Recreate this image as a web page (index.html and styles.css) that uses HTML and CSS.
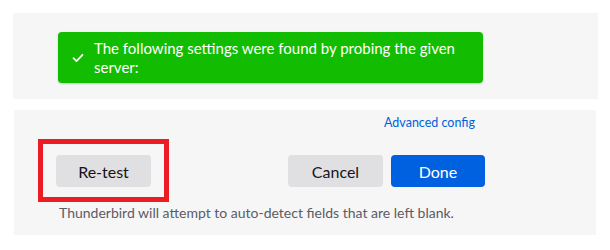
FILE: index.html
```html
<!DOCTYPE html>
<html lang="en">
<head>
    <meta charset="UTF-8">
    <title>Account setup</title>
    <link rel="stylesheet" href="styles.css">
</head>
<body>
    <div class="panel result-panel">
        <div class="notice">
            <svg class="notice-icon" width="12" height="10" viewBox="0 0 12 10">
                <path d="M1.5 5.2 L4.5 8.2 L10.5 1.8" fill="none" stroke="#fff" stroke-width="1.8" stroke-linecap="round" stroke-linejoin="round"/>
            </svg>
            <span class="notice-text">The following settings were found by probing the given server:</span>
        </div>
    </div>

    <div class="panel actions-panel">
        <div class="actions">
            <div class="link-row">
                <a href="#" class="config-link">Advanced config</a>
            </div>
            <div class="button-row">
                <div class="retest-wrap">
                    <button class="btn">Re-test</button>
                    <span class="highlight"></span>
                </div>
                <div class="button-group">
                    <button class="btn">Cancel</button>
                    <button class="btn primary">Done</button>
                </div>
            </div>
            <p class="hint">Thunderbird will attempt to auto-detect fields that are left blank.</p>
        </div>
    </div>
</body>
</html>
```

FILE: styles.css
```css
body {
    margin: 0;
    background-color: #fff;
    font-family: Lato, sans-serif;
    color: #15141a;
}
.panel {
    background-color: #f6f6f6;
}
.result-panel {
    margin: 13px 12px 0 13px;
    height: 86px;
    padding: 19px 0 0 45px;
    box-sizing: border-box;
}
.notice {
    width: 425px;
    height: 51px;
    box-sizing: border-box;
    display: flex;
    align-items: center;
    padding: 0 12px 0 14px;
    background-color: #12bc00;
    color: #fff;
    border-radius: 4px;
    box-shadow: 0 1px 2px rgba(0, 0, 0, 0.2);
}
.notice-icon {
    flex-shrink: 0;
    margin-right: 10px;
}
.notice-text {
    font-size: 15px;
    line-height: 19px;
}
.actions-panel {
    margin: 11px 14px 0 14px;
    height: 125px;
}
.actions {
    width: 429px;
    margin-left: 42px;
}
.link-row {
    text-align: right;
    padding: 1px 10px 0 0;
    height: 20px;
}
.config-link {
    font-size: 12.5px;
    color: #0061e0;
    text-decoration: none;
}
.button-row {
    display: flex;
    justify-content: space-between;
    margin-top: 24px;
}
.button-group {
    display: flex;
    gap: 8px;
}
.retest-wrap {
    position: relative;
}
.btn {
    width: 95px;
    height: 32px;
    border: none;
    border-radius: 4px;
    background-color: #e0e0e2;
    color: #15141a;
    font-family: Lato, sans-serif;
    font-size: 16px;
}
.btn.primary {
    width: 94px;
    background-color: #0061e0;
    color: #fff;
}
.highlight {
    position: absolute;
    left: -18px;
    top: -16px;
    width: 131px;
    height: 63px;
    box-sizing: border-box;
    border: 5px solid #ec1c24;
}
.hint {
    margin: 17px 0 0 3px;
    font-size: 14px;
    color: #5b5b66;
}
```
